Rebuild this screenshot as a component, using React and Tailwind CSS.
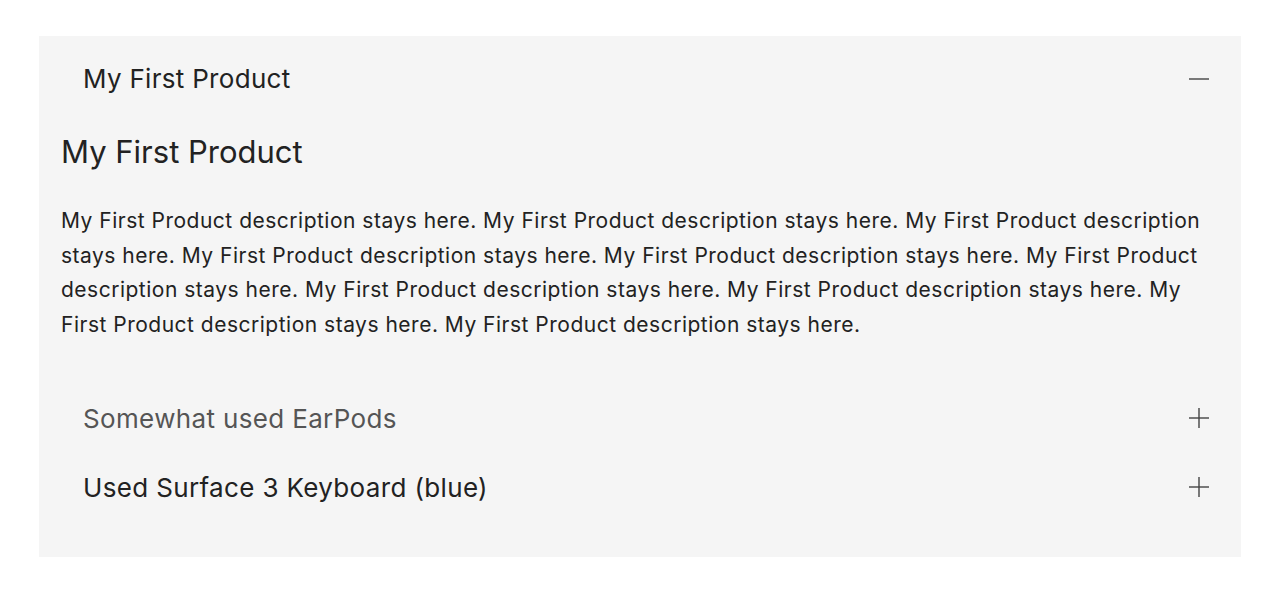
import React from "react";

const desc = Array(10).fill("My First Product description stays here.").join(" ");

function Minus() {
  return (
    <svg width="20" height="20" viewBox="0 0 20 20" className="shrink-0">
      <line x1="0" y1="10" x2="20" y2="10" stroke="#444" strokeWidth="1.4" />
    </svg>
  );
}
function Plus() {
  return (
    <svg width="20" height="20" viewBox="0 0 20 20" className="shrink-0">
      <line x1="0" y1="10" x2="20" y2="10" stroke="#444" strokeWidth="1.4" />
      <line x1="10" y1="0" x2="10" y2="20" stroke="#444" strokeWidth="1.4" />
    </svg>
  );
}

export default function App() {
  return (
    <div className="min-h-screen bg-white pt-[36px]" style={{ fontFamily: "Inter, 'Noto Sans', sans-serif" }}>
      <div className="mx-auto w-[1202px] bg-[#f5f5f5] pt-[8px] pb-[35px]">
        <div className="flex h-[69px] items-center justify-between pl-[44px] pr-[32px]">
          <span className="text-[26px] tracking-[0.3px] text-[#222]">My First Product</span>
          <Minus />
        </div>
        <div className="px-[22px] pb-[41px]">
          <h2 className="text-[31px] leading-[40px] text-[#222] mt-[19px]">My First Product</h2>
          <p className="mt-[32px] text-[21px] tracking-[0.5px] leading-[34.7px] text-[#222]">{desc}</p>
        </div>
        <div className="flex h-[69px] items-center justify-between pl-[44px] pr-[32px]">
          <span className="text-[26px] tracking-[0.35px] text-[#555]">Somewhat used EarPods</span>
          <Plus />
        </div>
        <div className="flex h-[69px] items-center justify-between pl-[44px] pr-[32px]">
          <span className="text-[26px] tracking-[0.35px] text-[#222]">Used Surface 3 Keyboard (blue)</span>
          <Plus />
        </div>
      </div>
    </div>
  );
}
